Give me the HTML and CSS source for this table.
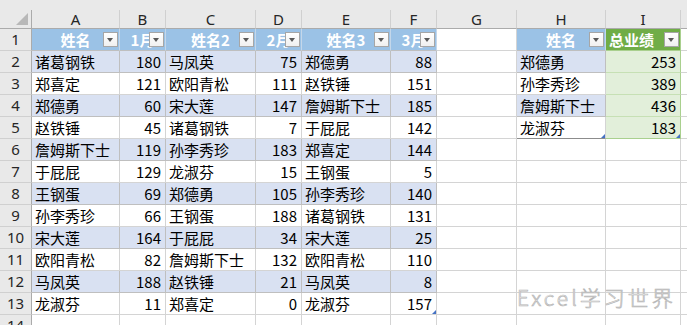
FILE: index.html
```html
<!DOCTYPE html>
<html lang="zh">
<head>
<meta charset="utf-8">
<link rel="stylesheet" href="styles.css">
</head>
<body>
<div class="sheet">
  <div class="strip"></div>
  <div class="corner"><span class="tri"></span></div>
  <div class="ch">A</div><div class="ch">B</div><div class="ch">C</div><div class="ch">D</div><div class="ch">E</div><div class="ch">F</div><div class="ch">G</div><div class="ch">H</div><div class="ch">I</div><div class="ch last"></div>

  <div class="rh">1</div>
  <div class="c th">姓名<span class="fb"></span></div>
  <div class="c th">1月<span class="fb"></span></div>
  <div class="c th">姓名2<span class="fb"></span></div>
  <div class="c th">2月<span class="fb"></span></div>
  <div class="c th">姓名3<span class="fb"></span></div>
  <div class="c th">3月<span class="fb"></span></div>
  <div class="c"></div>
  <div class="c th">姓名<span class="fb"></span></div>
  <div class="c gh">总业绩<span class="fb"></span></div>
  <div class="c"></div>

  <div class="rh">2</div>
  <div class="c b">诸葛钢铁</div><div class="c b n">180</div><div class="c b">马凤英</div><div class="c b n">75</div><div class="c b">郑德勇</div><div class="c b n">88</div>
  <div class="c"></div><div class="c b">郑德勇</div><div class="c g n">253</div><div class="c"></div>

  <div class="rh">3</div>
  <div class="c">郑喜定</div><div class="c n">121</div><div class="c">欧阳青松</div><div class="c n">111</div><div class="c">赵铁锤</div><div class="c n">151</div>
  <div class="c"></div><div class="c">孙李秀珍</div><div class="c g n">389</div><div class="c"></div>

  <div class="rh">4</div>
  <div class="c b">郑德勇</div><div class="c b n">60</div><div class="c b">宋大莲</div><div class="c b n">147</div><div class="c b">詹姆斯下士</div><div class="c b n">185</div>
  <div class="c"></div><div class="c b">詹姆斯下士</div><div class="c g n">436</div><div class="c"></div>

  <div class="rh">5</div>
  <div class="c">赵铁锤</div><div class="c n">45</div><div class="c">诸葛钢铁</div><div class="c n">7</div><div class="c">于屁屁</div><div class="c n">142</div>
  <div class="c"></div><div class="c endb">龙淑芬<span class="h"></span></div><div class="c g n endg">183<span class="h"></span></div><div class="c"></div>

  <div class="rh">6</div>
  <div class="c b">詹姆斯下士</div><div class="c b n">119</div><div class="c b">孙李秀珍</div><div class="c b n">183</div><div class="c b">郑喜定</div><div class="c b n">144</div>
  <div class="c"></div><div class="c"></div><div class="c"></div><div class="c"></div>

  <div class="rh">7</div>
  <div class="c">于屁屁</div><div class="c n">129</div><div class="c">龙淑芬</div><div class="c n">15</div><div class="c">王钢蛋</div><div class="c n">5</div>
  <div class="c"></div><div class="c"></div><div class="c"></div><div class="c"></div>

  <div class="rh">8</div>
  <div class="c b">王钢蛋</div><div class="c b n">69</div><div class="c b">郑德勇</div><div class="c b n">105</div><div class="c b">孙李秀珍</div><div class="c b n">140</div>
  <div class="c"></div><div class="c"></div><div class="c"></div><div class="c"></div>

  <div class="rh">9</div>
  <div class="c">孙李秀珍</div><div class="c n">66</div><div class="c">王钢蛋</div><div class="c n">188</div><div class="c">诸葛钢铁</div><div class="c n">131</div>
  <div class="c"></div><div class="c"></div><div class="c"></div><div class="c"></div>

  <div class="rh">10</div>
  <div class="c b">宋大莲</div><div class="c b n">164</div><div class="c b">于屁屁</div><div class="c b n">34</div><div class="c b">宋大莲</div><div class="c b n">25</div>
  <div class="c"></div><div class="c"></div><div class="c"></div><div class="c"></div>

  <div class="rh">11</div>
  <div class="c">欧阳青松</div><div class="c n">82</div><div class="c">詹姆斯下士</div><div class="c n">132</div><div class="c">欧阳青松</div><div class="c n">110</div>
  <div class="c"></div><div class="c"></div><div class="c"></div><div class="c"></div>

  <div class="rh">12</div>
  <div class="c b">马凤英</div><div class="c b n">188</div><div class="c b">赵铁锤</div><div class="c b n">21</div><div class="c b">马凤英</div><div class="c b n">8</div>
  <div class="c"></div><div class="c"></div><div class="c"></div><div class="c"></div>

  <div class="rh">13</div>
  <div class="c">龙淑芬</div><div class="c n">11</div><div class="c">郑喜定</div><div class="c n">0</div><div class="c">龙淑芬</div><div class="c n">157<span class="h"></span></div>
  <div class="c"></div><div class="c"></div><div class="c"></div><div class="c"></div>

  <div class="rh">14</div>
  <div class="c"></div><div class="c"></div><div class="c"></div><div class="c"></div><div class="c"></div><div class="c"></div>
  <div class="c"></div><div class="c"></div><div class="c"></div><div class="c"></div>

  <div class="wm">Excel学习世界</div>
</div>
</body>
</html>
```
FILE: styles.css
```css
html, body {
  margin: 0;
  padding: 0;
  background: #fff;
  overflow: hidden;
}
.sheet {
  position: relative;
  display: grid;
  grid-template-columns: 32px 88px 46px 90px 46px 89px 46px 80px 89px 75px 20px;
  grid-template-rows: 10px 19px repeat(14, 22px);
  width: 687px;
  height: 325px;
  overflow: hidden;
  font-family: "Noto Sans CJK SC", sans-serif;
  font-size: 15px;
  color: #000;
}
.strip {
  grid-column: 1 / -1;
  background: #e9e9e9;
}
.corner {
  position: relative;
  background: #e9e9e9;
  border-right: 1px solid #ababab;
  border-bottom: 1px solid #ababab;
}
.tri {
  position: absolute;
  right: 3px;
  bottom: 3px;
  width: 0;
  height: 0;
  border-left: 12px solid transparent;
  border-bottom: 12px solid #b8b8b8;
}
.ch {
  background: #e9e9e9;
  border-right: 1px solid #d0d0d0;
  border-bottom: 1px solid #ababab;
  font-family: "Noto Sans", sans-serif;
  font-size: 15px;
  line-height: 18px;
  text-align: center;
  color: #262626;
}
.rh {
  background: #e9e9e9;
  border-right: 1px solid #ababab;
  border-bottom: 1px solid #d0d0d0;
  font-family: "Noto Sans", sans-serif;
  font-size: 15px;
  line-height: 21px;
  text-align: center;
  color: #262626;
}
.c {
  position: relative;
  border-right: 1px solid #d4d4d4;
  border-bottom: 1px solid #d4d4d4;
  padding: 0 3px;
  line-height: 21px;
  white-space: nowrap;
  overflow: visible;
}
.b {
  background: #d9e1f2;
  border-right-color: #bfbfbf;
  border-bottom-color: #bfbfbf;
}
.n {
  text-align: right;
  padding-right: 4px;
}
.th {
  background: #9bc2e6;
  color: #fff;
  font-weight: bold;
  text-align: center;
  border-right-color: #c4d7ea;
  border-bottom-color: #bfbfbf;
}
.gh {
  background: #70ad47;
  color: #fff;
  font-weight: bold;
  border-right-color: #a9d08e;
  border-bottom-color: #a9d08e;
}
.g {
  background: #e2efda;
  border-right-color: #a9d08e;
  border-bottom-color: #c6e0b4;
}
.endb {
  border-bottom-color: #8c8c8c;
}
.endg {
  border-bottom-color: #a9d08e;
}
.fb {
  position: absolute;
  right: 1px;
  top: 3px;
  width: 13px;
  height: 13px;
  background: linear-gradient(#ffffff, #f0f0f0);
  border: 1px solid #a6a6a6;
}
.fb::after {
  content: "";
  position: absolute;
  left: 3px;
  top: 5px;
  width: 0;
  height: 0;
  border-left: 3.5px solid transparent;
  border-right: 3.5px solid transparent;
  border-top: 4px solid #595959;
}
.h {
  position: absolute;
  right: 0;
  bottom: 0;
  width: 0;
  height: 0;
  border-left: 4px solid transparent;
  border-bottom: 4px solid #4472c4;
}
.wm {
  position: absolute;
  left: 517px;
  top: 284px;
  font-family: "Noto Sans CJK SC", sans-serif;
  font-size: 21px;
  font-weight: 300;
  letter-spacing: 3px;
  color: #fbfbfb;
  -webkit-text-stroke: 0.7px #b4b4b4;
  line-height: 26px;
  white-space: nowrap;
}
```
